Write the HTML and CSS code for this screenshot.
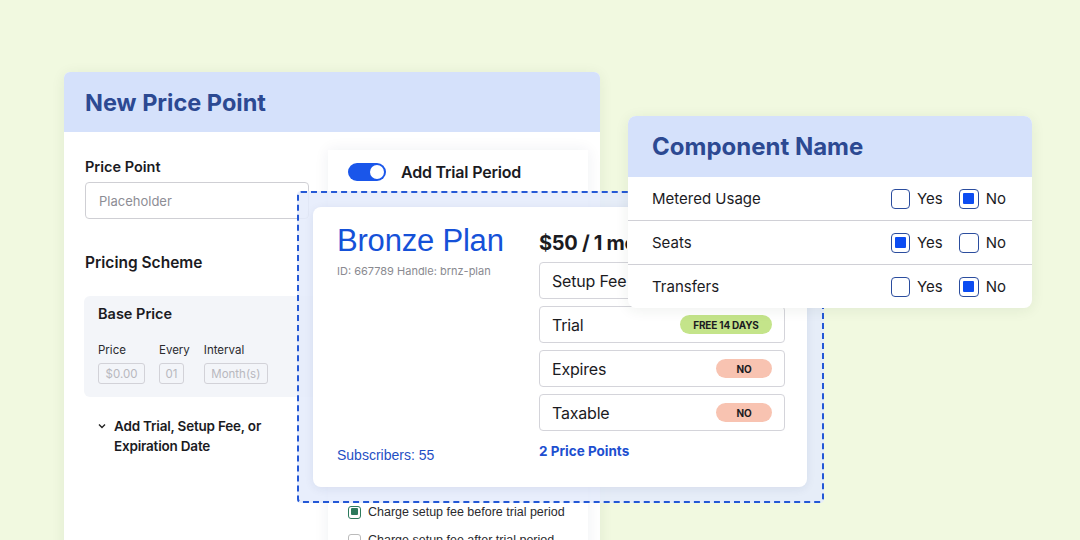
FILE: index.html
```html
<!DOCTYPE html>
<html>
<head>
<meta charset="utf-8">
<link rel="stylesheet" href="styles.css">
</head>
<body>
<div class="canvas">
  <section class="card price-card">
    <header class="card-head"><h1>New Price Point</h1></header>
    <div class="price-body">
      <div class="form-col">
        <label class="field-label">Price Point</label>
        <div class="input">Placeholder</div>
        <h2 class="section-title">Pricing Scheme</h2>
        <div class="base-box">
          <div class="base-title">Base Price</div>
          <div class="mini-fields">
            <div class="mini">
              <span class="mini-label">Price</span>
              <span class="mini-input w-price">$0.00</span>
            </div>
            <div class="mini">
              <span class="mini-label">Every</span>
              <span class="mini-input w-every">01</span>
            </div>
            <div class="mini">
              <span class="mini-label">Interval</span>
              <span class="mini-input w-interval">Month(s)</span>
            </div>
          </div>
        </div>
        <div class="expander">
          <svg class="chev" width="8" height="6" viewBox="0 0 8 6"><path d="M1 1.5 L4 4.5 L7 1.5" fill="none" stroke="#222" stroke-width="1.4"/></svg>
          <span>Add Trial, Setup Fee, or<br>Expiration Date</span>
        </div>
      </div>
      <div class="trial-panel">
        <div class="toggle-row">
          <span class="toggle"><span class="knob"></span></span>
          <span class="toggle-label">Add Trial Period</span>
        </div>
        <div class="check-list">
          <div class="check-row"><span class="gcheck on"></span>Charge setup fee before trial period</div>
          <div class="check-row"><span class="gcheck"></span>Charge setup fee after trial period</div>
        </div>
      </div>
    </div>
  </section>

  <section class="dashed">
    <div class="plan-card">
      <div class="plan-left">
        <div>
          <div class="plan-name">Bronze Plan</div>
          <div class="plan-meta">ID: 667789 Handle: brnz-plan</div>
        </div>
        <div class="subs">Subscribers: 55</div>
      </div>
      <div class="plan-right">
        <div class="plan-price">$50 / 1 month</div>
        <div class="plan-rows">
          <div class="plan-row"><span class="clip">Setup Fee</span></div>
          <div class="plan-row"><span>Trial</span><span class="badge green">FREE 14 DAYS</span></div>
          <div class="plan-row"><span>Expires</span><span class="badge pink">NO</span></div>
          <div class="plan-row"><span>Taxable</span><span class="badge pink">NO</span></div>
        </div>
        <div class="points">2 Price Points</div>
      </div>
    </div>
  </section>

  <section class="card comp-card">
    <header class="card-head comp-head"><h1>Component Name</h1></header>
    <div class="comp-row">
      <span class="comp-label">Metered Usage</span>
      <span class="opts">
        <span class="opt"><span class="cb"></span>Yes</span>
        <span class="opt"><span class="cb on"></span>No</span>
      </span>
    </div>
    <div class="comp-row">
      <span class="comp-label">Seats</span>
      <span class="opts">
        <span class="opt"><span class="cb on"></span>Yes</span>
        <span class="opt"><span class="cb"></span>No</span>
      </span>
    </div>
    <div class="comp-row">
      <span class="comp-label">Transfers</span>
      <span class="opts">
        <span class="opt"><span class="cb"></span>Yes</span>
        <span class="opt"><span class="cb on"></span>No</span>
      </span>
    </div>
  </section>
</div>
</body>
</html>
```

FILE: styles.css
```css
* { box-sizing: border-box; margin: 0; padding: 0; }
html, body { width: 1080px; height: 540px; overflow: hidden; }
body {
  background: #f1f9e0;
  font-family: "Inter", "Liberation Sans", sans-serif;
  color: #1b1b1f;
}
.canvas { position: relative; width: 1080px; height: 540px; }

.card {
  position: absolute;
  background: #fff;
  border-radius: 6px;
  overflow: hidden;
  box-shadow: 0 2px 14px rgba(40, 60, 40, 0.08);
}
.card-head {
  background: #d5e1fb;
  height: 60px;
  display: flex;
  align-items: center;
  padding-left: 21px;
}
.card-head h1 {
  font-size: 23.5px;
  font-weight: 700;
  color: #2c4992;
  letter-spacing: 0;
}

/* Left card */
.price-card { left: 64px; top: 72px; width: 536px; height: 490px; border-radius: 6px 6px 0 0; }
.price-body { display: flex; }
.form-col { width: 264px; padding: 26px 0 0 21px; }
.field-label { display: block; font-size: 14.5px; font-weight: 600; line-height: 18px; }
.input {
  margin-top: 6px;
  width: 224px;
  height: 37px;
  border: 1px solid #cfcfd4;
  border-radius: 4px;
  padding-left: 13px;
  display: flex;
  align-items: center;
  font-size: 13px;
  color: #8d8d95;
}
.section-title { margin-top: 34px; font-size: 15.5px; font-weight: 600; line-height: 20px; }
.base-box {
  margin-top: 23px;
  margin-left: -1px;
  width: 260px;
  height: 101px;
  background: #f3f5f9;
  border-radius: 6px;
  padding: 9px 14px 0;
}
.base-title { font-size: 14.5px; font-weight: 600; line-height: 18px; }
.mini-fields { display: flex; gap: 14px; margin-top: 19px; }
.mini { display: flex; flex-direction: column; }
.mini-label { font-size: 11.5px; line-height: 16px; color: #2a2a2e; }
.mini-input {
  margin-top: 5px;
  height: 21px;
  border: 1px solid #d2d2d8;
  border-radius: 3px;
  font-size: 11.5px;
  color: #b8b8be;
  display: flex;
  align-items: center;
  justify-content: center;
}
.w-price { width: 47px; }
.w-every { width: 25px; }
.w-interval { width: 64px; }
.expander {
  margin-top: 19px;
  display: flex;
  align-items: flex-start;
  padding-left: 13px;
  font-size: 13.5px;
  font-weight: 600;
  line-height: 20px;
  letter-spacing: -0.2px;
}
.chev { margin-top: 7px; margin-right: 8px; flex: none; }

.trial-panel {
  margin-top: 18px;
  width: 260px;
  height: 420px;
  background: #fff;
  box-shadow: 0 0 14px rgba(30, 40, 80, 0.07);
  padding: 13px 0 0 20px;
}
.toggle-row { display: flex; align-items: center; height: 18px; }
.toggle {
  width: 38px; height: 18px; border-radius: 9px;
  background: #1a56ea;
  position: relative;
  flex: none;
}
.knob {
  position: absolute; right: 2px; top: 2px;
  width: 14px; height: 14px; border-radius: 50%; background: #fff;
}
.toggle-label { margin-left: 15px; font-size: 16px; font-weight: 600; letter-spacing: -0.2px; }
.check-list { margin-top: 323px; display: flex; flex-direction: column; gap: 12px; }
.check-row {
  display: flex; align-items: center; height: 16px;
  font-family: "Liberation Sans", sans-serif;
  font-size: 12.5px; color: #2a2a2e;
}
.gcheck {
  width: 13px; height: 13px; border-radius: 3px;
  border: 1.5px solid #bbb; margin-right: 7px; flex: none;
  position: relative;
}
.gcheck.on { border-color: #2c7a5c; background: #fff; }
.gcheck.on::after {
  content: ""; position: absolute; left: 1.5px; top: 1.5px; width: 7px; height: 7px;
  background: #2c7a5c; border-radius: 1px;
}

/* Dashed overlay card */
.dashed {
  position: absolute;
  left: 297px; top: 191px;
  width: 527px; height: 312px;
  border: 2px dashed #2458d6;
  border-radius: 4px;
  background: rgba(228, 235, 251, 0.85);
  padding: 14px;
}
.plan-card {
  width: 494px; height: 280px;
  background: #fff;
  border-radius: 8px;
  box-shadow: 0 2px 10px rgba(30, 40, 90, 0.08);
  display: flex;
  padding: 16px 22px 24px 24px;
}
.plan-left { width: 202px; display: flex; flex-direction: column; justify-content: space-between; }
.plan-name {
  font-family: "Liberation Sans", sans-serif;
  font-size: 31px; line-height: 36px; color: #1551d8; letter-spacing: -0.2px;
}
.plan-meta { margin-top: 5px; font-size: 11px; color: #8a8a90; }
.subs { font-family: "Liberation Sans", sans-serif; font-size: 14px; color: #1f4fc4; line-height: 16px; }
.plan-right { width: 246px; padding-top: 8px; }
.plan-price {
  width: 88px; overflow: hidden;
  font-size: 20px; font-weight: 700; line-height: 24px; letter-spacing: -0.3px; white-space: nowrap;
}
.plan-rows { margin-top: 7px; display: flex; flex-direction: column; gap: 7px; }
.plan-row {
  height: 37px;
  border: 1px solid #d4d4da;
  border-radius: 4px;
  display: flex; align-items: center; justify-content: space-between;
  padding: 0 12px 0 12px;
  font-size: 16px;
  letter-spacing: -0.2px;
}
.clip { white-space: nowrap; }
.badge {
  height: 19px; border-radius: 10px;
  font-size: 10px; font-weight: 700;
  display: flex; align-items: center; justify-content: center;
}
.badge.green { background: #c4e48a; width: 92px; }
.badge.pink { background: #f8c3b1; width: 56px; }
.points { margin-top: 11px; font-size: 13.5px; font-weight: 700; color: #1d4fd0; line-height: 18px; }

/* Component card */
.comp-card { left: 628px; top: 116px; width: 404px; height: 192px; border-radius: 8px; }
.comp-head { height: 61px; padding-left: 24px; }
.comp-head h1 { font-size: 24px; }
.comp-row {
  height: 44px;
  border-top: 1px solid #d0d0d6;
  display: flex; align-items: center; justify-content: space-between;
  padding: 0 26px 0 24px;
  font-size: 15px;
}
.comp-row:first-of-type { border-top: none; height: 43px; }
.opts { display: flex; gap: 16px; }
.opt { display: flex; align-items: center; font-size: 15px; }
.opt:first-child { width: 52px; }
.cb {
  width: 20px; height: 20px;
  border: 1.5px solid #2b4d9e;
  border-radius: 4px;
  margin-right: 7px;
  position: relative;
  background: #fff;
}
.cb.on::after {
  content: ""; position: absolute; left: 3px; top: 3px;
  width: 11px; height: 11px; background: #0c4cf2; border-radius: 1px;
}
```
